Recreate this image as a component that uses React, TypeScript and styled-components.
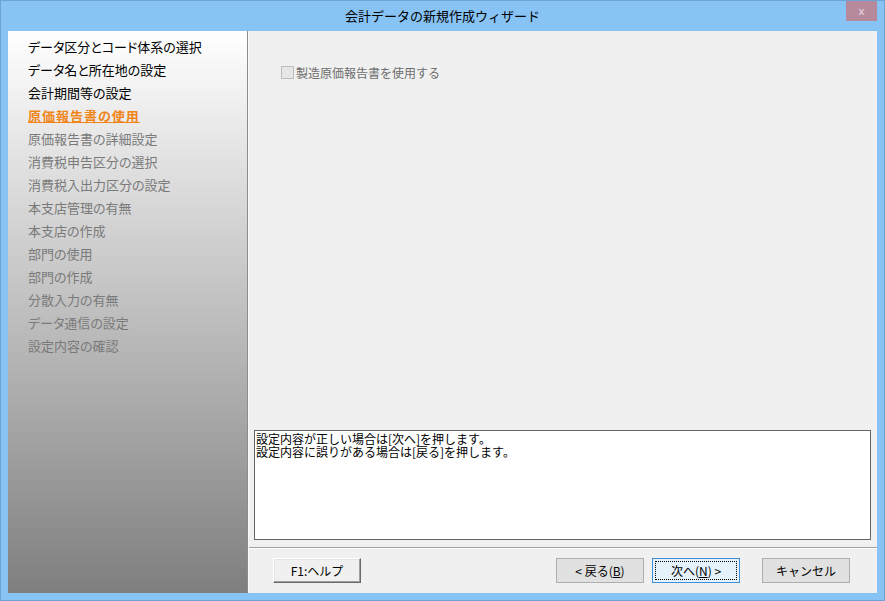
import * as React from 'react';
import styled, { createGlobalStyle, css } from 'styled-components';

const GlobalStyle = createGlobalStyle`
  html, body {
    margin: 0;
    padding: 0;
    background: #ffffff;
  }
  body {
    font-family: 'Noto Sans CJK JP', 'Noto Sans', sans-serif;
  }
`;

const Window = styled.div`
  width: 885px;
  height: 601px;
  box-sizing: border-box;
  background: #88c3f6;
  border: 1px solid #6ea3d6;
  display: flex;
  flex-direction: column;
`;

const TitleBar = styled.div`
  position: relative;
  height: 30px;
  padding-bottom: 1px;
  box-sizing: border-box;
  display: flex;
  align-items: center;
  justify-content: center;
  font-size: 13px;
  color: #000;
  user-select: none;
`;

const CloseButton = styled.div`
  position: absolute;
  top: 0;
  right: 7px;
  width: 31px;
  height: 20px;
  background: #b6899c;
  color: #ecd6e0;
  font-family: 'DejaVu Sans', sans-serif;
  font-size: 11px;
  display: flex;
  align-items: center;
  justify-content: center;
`;

const Client = styled.div`
  flex: 1;
  margin: 0 7px 7px 7px;
  display: flex;
  min-height: 0;
`;

const LeftMenu = styled.div`
  width: 240px;
  box-sizing: border-box;
  background: linear-gradient(to bottom, #ffffff 0%, #7f7f7f 100%);
  border-right: 1px solid #8c8c8c;
  padding: 4px 0 0 20px;
  display: flex;
  flex-direction: column;
`;

type Step = 'done' | 'current' | 'todo';

const Item = styled.div<{ $step: Step }>`
  height: 23px;
  line-height: 23px;
  font-size: 13px;
  white-space: nowrap;
  font-feature-settings: 'palt';
  color: #7a7a7a;
  ${p =>
    p.$step === 'done' &&
    css`
      color: #000;
    `}
  ${p =>
    p.$step === 'current' &&
    css`
      color: #f08519;
      font-weight: bold;
      text-decoration: underline;
      letter-spacing: 1px;
    `}
`;

const RightPane = styled.div`
  flex: 1;
  background: #f0f0f0;
  border-left: 1px solid #fbfbfb;
  display: flex;
  flex-direction: column;
`;

const Content = styled.div`
  flex: 1;
  padding: 35px 0 0 32px;
`;

const CheckRow = styled.div`
  display: flex;
  align-items: center;
  height: 13px;
  font-size: 12px;
  color: #6d6d6d;
`;

const CheckBox = styled.span`
  width: 13px;
  height: 13px;
  box-sizing: border-box;
  border: 1px solid #bcbcbc;
  background: #e6e6e6;
  margin-right: 2px;
`;

const MessageBox = styled.div`
  height: 110px;
  box-sizing: border-box;
  margin: 0 6px 0 5px;
  border: 1px solid #646464;
  background: #ffffff;
  padding: 1px 1px;
  font-size: 12px;
  line-height: 13px;
  color: #000;
  white-space: pre;
`;

const Separator = styled.div`
  margin-top: 7px;
  border-top: 1px solid #a0a0a0;
  border-bottom: 1px solid #ffffff;
`;

const Footer = styled.div`
  height: 44px;
  box-sizing: border-box;
  padding: 9px 27px 0 24px;
  display: flex;
  align-items: flex-start;
`;

interface ButtonProps {
  $variant?: 'raised' | 'focus';
  $gap?: number;
}

const Button = styled.div<ButtonProps>`
  width: 88px;
  height: 25px;
  box-sizing: border-box;
  border: 1px solid #adadad;
  background: #e1e1e1;
  font-size: 12px;
  color: #000;
  display: flex;
  align-items: center;
  justify-content: center;
  margin-left: ${p => (p.$gap === undefined ? 0 : p.$gap)}px;
  position: relative;
  ${p =>
    p.$variant === 'raised' &&
    css`
      background: #f0f0f0;
      border-color: #ffffff #696969 #696969 #ffffff;
      box-shadow: inset -1px -1px 0 #a0a0a0, inset 1px 1px 0 #e3e3e3;
    `}
  ${p =>
    p.$variant === 'focus' &&
    css`
      background: #e5f1fb;
      border-color: #3c8fd8;
      &::after {
        content: '';
        position: absolute;
        inset: 2px;
        border: 1px dotted #000;
      }
    `}
`;

const Spacer = styled.div`
  flex: 1;
`;

const steps: [string, Step][] = [
  ['データ区分とコード体系の選択', 'done'],
  ['データ名と所在地の設定', 'done'],
  ['会計期間等の設定', 'done'],
  ['原価報告書の使用', 'current'],
  ['原価報告書の詳細設定', 'todo'],
  ['消費税申告区分の選択', 'todo'],
  ['消費税入出力区分の設定', 'todo'],
  ['本支店管理の有無', 'todo'],
  ['本支店の作成', 'todo'],
  ['部門の使用', 'todo'],
  ['部門の作成', 'todo'],
  ['分散入力の有無', 'todo'],
  ['データ通信の設定', 'todo'],
  ['設定内容の確認', 'todo'],
];

export default function App() {
  return (
    <>
      <GlobalStyle />
      <Window>
        <TitleBar>
          会計データの新規作成ウィザード
          <CloseButton>x</CloseButton>
        </TitleBar>
        <Client>
          <LeftMenu>
            {steps.map(([label, step]) => (
              <Item key={label} $step={step}>
                {label}
              </Item>
            ))}
          </LeftMenu>
          <RightPane>
            <Content>
              <CheckRow>
                <CheckBox />
                製造原価報告書を使用する
              </CheckRow>
            </Content>
            <MessageBox>
              {'設定内容が正しい場合は[次へ]を押します。\n設定内容に誤りがある場合は[戻る]を押します。'}
            </MessageBox>
            <Separator />
            <Footer>
              <Button $variant="raised">F1:ヘルプ</Button>
              <Spacer />
              <Button>
                &lt; 戻る(<u>B</u>)
              </Button>
              <Button $variant="focus" $gap={8}>
                次へ(<u>N</u>) &gt;
              </Button>
              <Button $gap={22}>キャンセル</Button>
            </Footer>
          </RightPane>
        </Client>
      </Window>
    </>
  );
}
